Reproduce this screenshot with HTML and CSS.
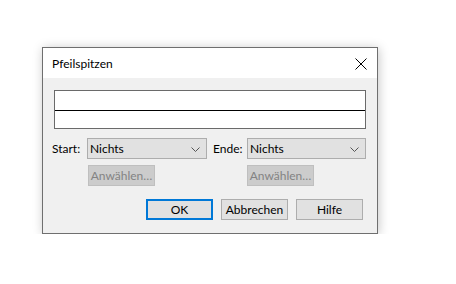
FILE: index.html
```html
<!DOCTYPE html>
<html>
<head>
<meta charset="utf-8">
<link rel="stylesheet" href="styles.css">
</head>
<body>
<div class="stage">
  <div class="dialog">
    <div class="titlebar">
      <span class="title">Pfeilspitzen</span>
      <svg class="close" width="12" height="12" viewBox="0 0 12 12"><path d="M0.5 0.5 L11.5 11.5 M11.5 0.5 L0.5 11.5" stroke="#000" stroke-width="1" fill="none"/></svg>
    </div>
    <div class="body">
      <div class="preview"><div class="line"></div></div>
      <div class="row combos">
        <span class="label l-start">Start:</span>
        <div class="combo c-start"><span>Nichts</span><svg class="chev" width="9" height="5" viewBox="0 0 9 5"><path d="M0.5 0.5 L4.5 4.5 L8.5 0.5" stroke="#555" fill="none"/></svg></div>
        <span class="label l-end">Ende:</span>
        <div class="combo c-end"><span>Nichts</span><svg class="chev" width="9" height="5" viewBox="0 0 9 5"><path d="M0.5 0.5 L4.5 4.5 L8.5 0.5" stroke="#555" fill="none"/></svg></div>
      </div>
      <div class="row selects">
        <div class="btn disabled s1">Anwählen…</div>
        <div class="btn disabled s2">Anwählen…</div>
      </div>
      <div class="row actions">
        <div class="btn default">OK</div>
        <div class="btn">Abbrechen</div>
        <div class="btn">Hilfe</div>
      </div>
    </div>
  </div>
</div>
</body>
</html>
```

FILE: styles.css
```css
html, body {
  margin: 0;
  padding: 0;
  background: #ffffff;
}
.stage {
  padding: 47px 0 0 42px;
}
.dialog {
  width: 334px;
  height: 185px;
  border: 1px solid #6f6f6f;
  background: #f0f0f0;
  box-shadow: 1px 1px 10px rgba(0,0,0,0.22);
  font-family: "Lato", "Noto Sans", sans-serif;
  font-size: 12px;
  color: #000;
  display: flex;
  flex-direction: column;
}
.titlebar {
  height: 30px;
  background: #ffffff;
  display: flex;
  align-items: center;
  justify-content: space-between;
  padding: 0 10px 0 9px;
}
.title {
  margin-top: 1px;
}
.close {
  margin-top: 2px;
}
.body {
  padding: 12px 0 0 9px;
}
.preview {
  margin-left: 2px;
  width: 310px;
  height: 37px;
  border: 1px solid #6a6a6a;
  background: #fff;
  display: flex;
  align-items: center;
}
.line {
  width: 100%;
  height: 1px;
  background: #000;
  margin-top: 1px;
}
.row {
  display: flex;
  align-items: center;
}
.combos {
  margin-top: 9px;
  height: 21px;
}
.label {
  line-height: 21px;
}
.l-start { width: 35px; }
.l-end { width: 34px; margin-left: 6px; }
.combo {
  box-sizing: border-box;
  height: 21px;
  background: #e1e1e1;
  border: 1px solid #adadad;
  display: flex;
  align-items: center;
  justify-content: space-between;
  padding: 0 6px 0 2px;
}
.c-start { width: 120px; }
.c-end { width: 119px; }
.chev { margin-top: 1px; }
.btn {
  box-sizing: border-box;
  width: 67px;
  height: 21px;
  background: #e1e1e1;
  border: 1px solid #adadad;
  display: flex;
  align-items: center;
  justify-content: center;
}
.selects {
  margin-top: 6px;
}
.btn.disabled {
  background: #cccccc;
  border-color: #bfbfbf;
  color: #838383;
}
.s1 { margin-left: 36px; }
.s2 { margin-left: 92px; }
.actions {
  margin-top: 13px;
  margin-left: 94px;
  gap: 8px;
}
.btn.default {
  border: 2px solid #0078d7;
}
```
